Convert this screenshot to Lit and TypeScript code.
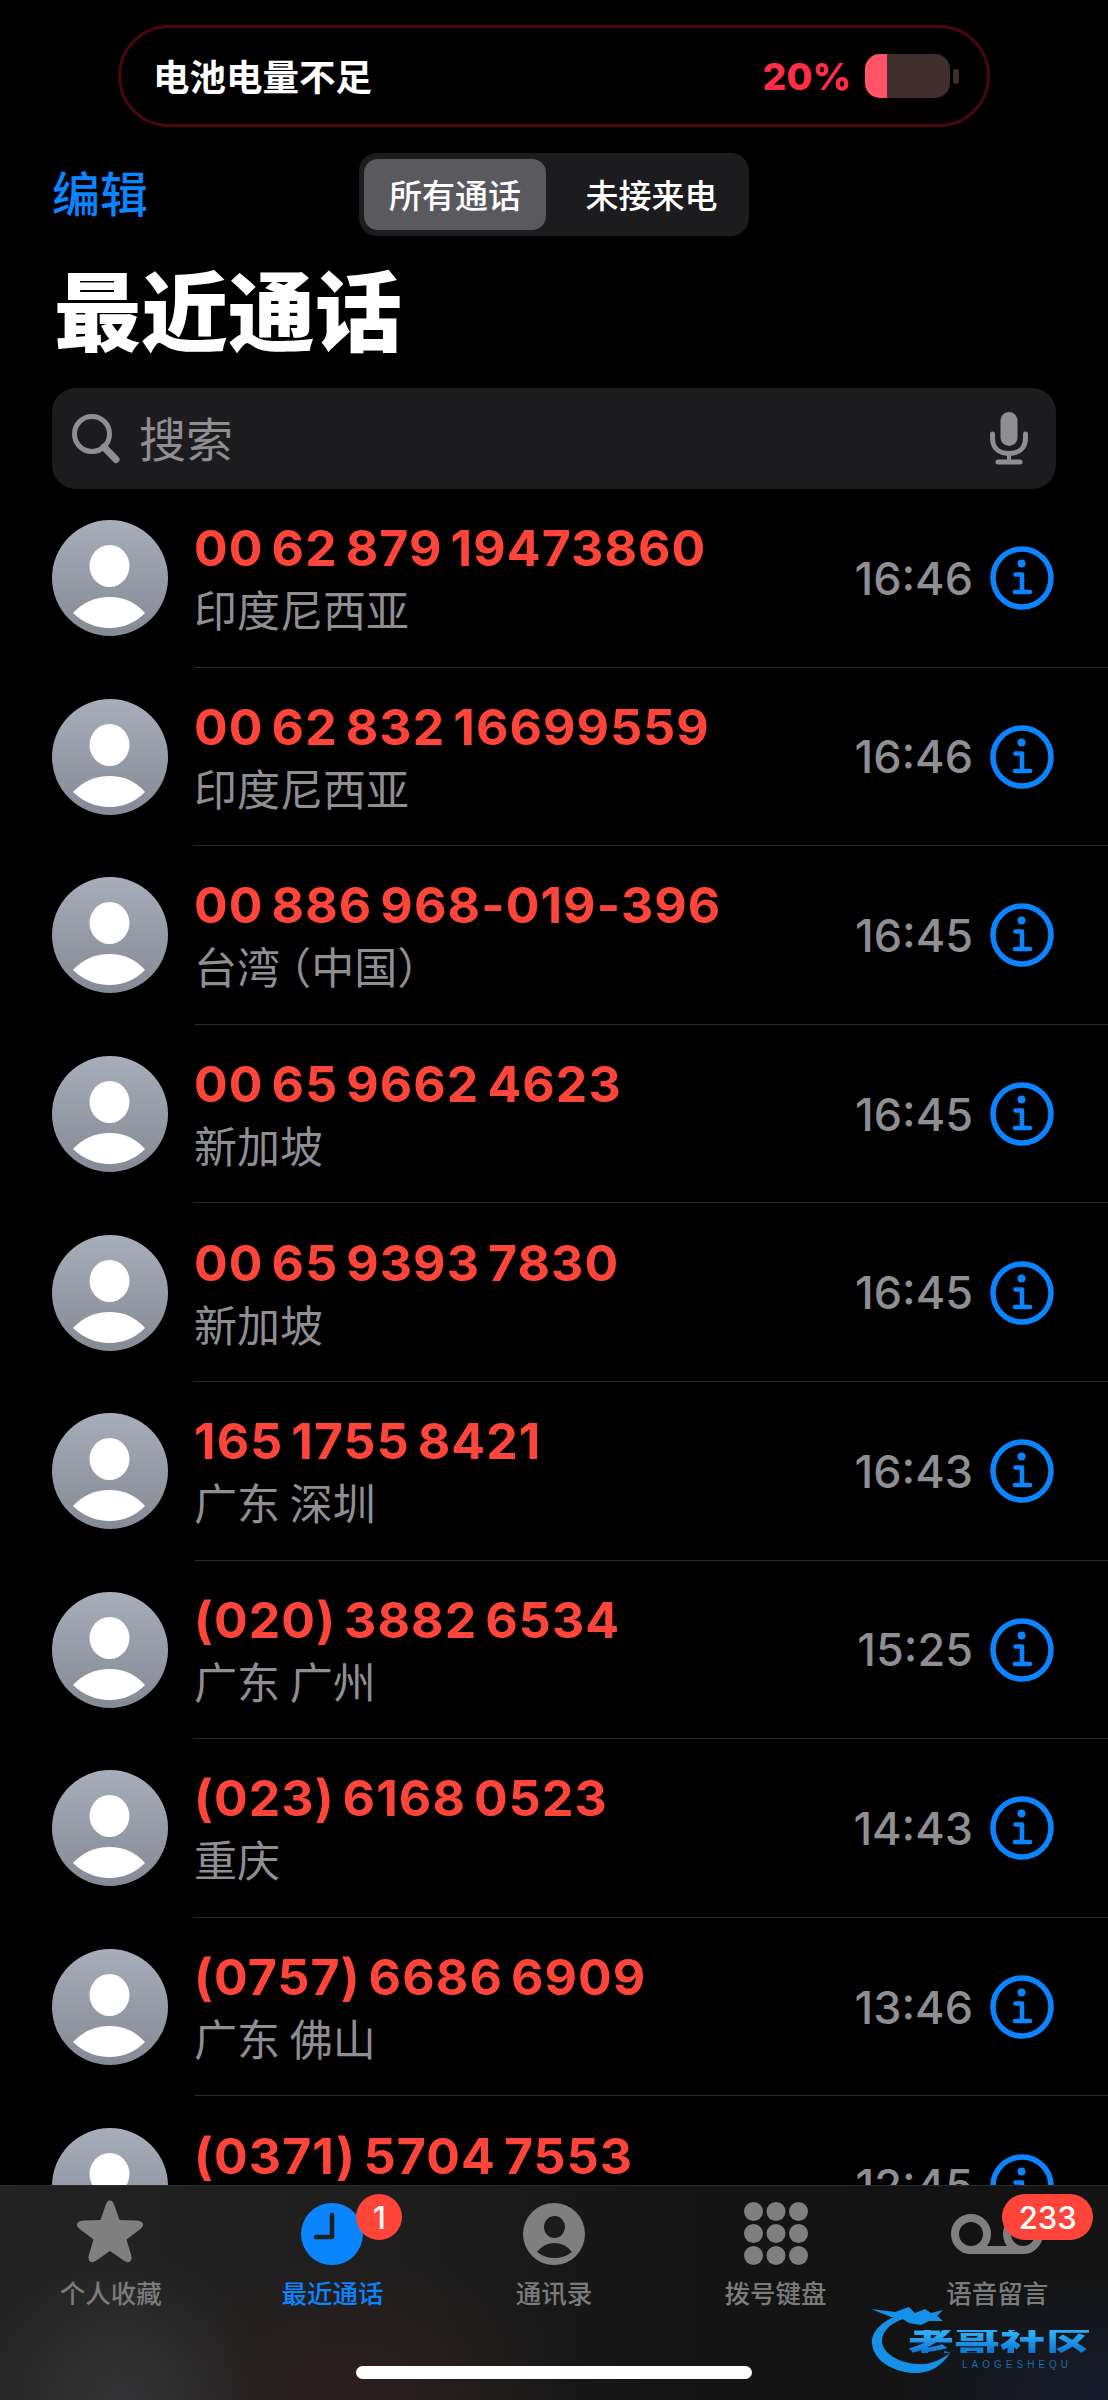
import { LitElement, html, css, svg } from "lit";
import { customElement } from "lit/decorators.js";

const rows = [
  ["00 62 879 19473860", "印度尼西亚", "16:46"],
  ["00 62 832 16699559", "印度尼西亚", "16:46"],
  ["00 886 968-019-396", "台湾 （中国）", "16:45"],
  ["00 65 9662 4623", "新加坡", "16:45"],
  ["00 65 9393 7830", "新加坡", "16:45"],
  ["165 1755 8421", "广东 深圳", "16:43"],
  ["(020) 3882 6534", "广东 广州", "15:25"],
  ["(023) 6168 0523", "重庆", "14:43"],
  ["(0757) 6686 6909", "广东 佛山", "13:46"],
  ["(0371) 5704 7553", "", "12:45"],
];

const avatar = html`<svg class="avatar" viewBox="0 0 116 116">
  <defs><linearGradient id="av" x1="0" y1="0" x2="0" y2="1"><stop offset="0" stop-color="#a7adba"/><stop offset="1" stop-color="#858a94"/></linearGradient></defs>
  <circle cx="58" cy="58" r="58" fill="url(#av)"/>
  <ellipse cx="57.5" cy="46" rx="20" ry="21" fill="#fff"/>
  <path d="M21 93Q36 77 57.5 77T93 93Q78 108 57.5 108T21 93Z" fill="#fff"/>
</svg>`;

const info = html`<svg class="info" viewBox="0 0 64 64" fill="none">
  <circle cx="32" cy="32" r="29" stroke="#0a84ff" stroke-width="5.5"/>
  <circle cx="31.5" cy="17.500" r="4" fill="#0a84ff"/>
  <path d="M25.500 28.500H32V45.500M25 46H40" stroke="#0a84ff" stroke-width="4.600" stroke-linecap="round" stroke-linejoin="round"/>
</svg>`;

const dots = [0, 1, 2].flatMap((r) => [0, 1, 2].map((c) => svg`<circle cx="${9.5 + c * 22.5}" cy="${9.5 + r * 22}" r="9.5" fill="#7f7f7f"/>`));

const tabs = [
  { label: "个人收藏", icon: html`<svg class="ico" viewBox="1 2.500 68 66"><path d="M34 3C36.500 3 37.500 5 38.500 8L43.500 22.500 59.500 23C64 23 66.500 24.500 67 26.500 67.500 28.500 66 30.500 63 32.500L50.500 42 55 57C56 60.500 55.500 63 54 64 52 65.500 50 64.500 47 62.500L34 53.500 21 62.500C18 64.500 16 65.500 14 64 12.500 63 12 60.500 13 57L17.500 42 5 32.500C2 30.500 .5 28.500 1 26.500 1.500 24.500 4 23 8.500 23L24.500 22.500 29.500 8C30.500 5 31.500 3 34 3Z" fill="#7f7f7f"/></svg>` },
  { label: "最近通话", active: true, badge: "1", icon: html`<svg class="ico" viewBox="0 0 68 66"><circle cx="34" cy="34" r="31" fill="#0a84ff"/><path d="M34 15V37H18" fill="none" stroke="#1f2024" stroke-width="4.600" stroke-linecap="round" stroke-linejoin="round"/></svg>` },
  { label: "通讯录", icon: html`<svg class="ico" viewBox="0 0 68 66"><circle cx="34" cy="34" r="31" fill="#7f7f7f"/><ellipse cx="34.500" cy="27" rx="10.500" ry="11" fill="#1c1a1a"/><path d="M17 52Q24 43 34.500 43T52 52Q44 58 34.500 58T17 52Z" fill="#1c1a1a"/></svg>` },
  { label: "拨号键盘", icon: html`<svg class="ico keypad" viewBox="0 0 64 63">${dots}</svg>` },
  { label: "语音留言", badge: "233", wide: true, icon: html`<svg class="ico vm" viewBox="0 0 92 40"><path d="M20 36H72" stroke="#7f7f7f" stroke-width="8" stroke-linecap="round"/><circle cx="20" cy="20" r="16" fill="none" stroke="#7f7f7f" stroke-width="8"/><circle cx="72" cy="20" r="16" fill="none" stroke="#7f7f7f" stroke-width="8"/></svg>` },
];

@customElement("app-root")
export class AppRoot extends LitElement {
  static styles = css`
    :host {
      display: flex;
      flex-direction: column;
      position: relative;
      width: 1108px;
      height: 2400px;
      overflow: hidden;
      background: #000;
      color: #fff;
      font-family: Inter, "Noto Sans CJK SC", sans-serif;
    }
    .top { flex: none; height: 489px; padding: 25px 52px 0; box-sizing: border-box; display: flex; flex-direction: column; }
    .top > * { flex: none; }
    .island {
      margin: 0 66px;
      height: 102px;
      box-sizing: border-box;
      border: 3px solid #4c0513;
      border-radius: 51px;
      display: flex;
      align-items: center;
      padding: 0 28px 0 32px;
    }
    .island .msg { font-size: 36.500px; font-weight: 700; flex: 1; font-family: "Noto Sans CJK SC", sans-serif; padding-bottom: 2px; }
    .island .pct { font-size: 37.500px; font-weight: 800; color: #ff2d46; margin-right: 14px; }
    .batt { width: 85px; height: 44px; border-radius: 15px; overflow: hidden; background: #3f2f2f; display: flex; }
    .batt i { display: block; width: 22px; background: #ff5366; }
    .nub { width: 6px; height: 15px; margin-left: 3px; border-radius: 3px; background: #3f2f2f; }
    .nav { height: 83px; margin-top: 26px; display: grid; grid-template-columns: 307px auto; align-items: center; }
    .edit { font-size: 48px; line-height: 60px; padding-bottom: 8px; color: #0a84ff; font-family: "Noto Sans CJK SC", sans-serif; font-weight: 500; }
    .seg { width: 390px; height: 83px; box-sizing: border-box; background: #1c1c1e; border-radius: 18px; padding: 6px 5px; display: grid; grid-template-columns: 182px 1fr; }
    .seg div { display: flex; align-items: center; justify-content: center; font-size: 33px; font-weight: 500; border-radius: 14px; font-family: "Noto Sans CJK SC", sans-serif; padding-bottom: 2px; }
    .seg .on { background: #5a5a5e; }
    .seg .off { padding-left: 13px; }
    h1 { margin: 18px 0 0 2px; font-size: 87px; line-height: 106px; height: 106px; font-weight: 900; font-family: "Noto Sans CJK SC", sans-serif; }
    .search { margin-top: 28px; height: 101px; background: #1c1c1e; border-radius: 24px; display: flex; align-items: center; padding: 0 28px 0 20px; color: #8e8e93; }
    .search .q { width: 48px; height: 50px; flex: none; }
    .search .t { flex: 1; font-size: 47px; line-height: 60px; margin-left: 19px; padding-bottom: 4px; font-family: "Noto Sans CJK SC", sans-serif; }
    .search .m { width: 38px; height: 53px; flex: none; }
    .list { flex: 1; min-height: 0; overflow: hidden; }
    .row { height: 178.600px; box-sizing: border-box; display: flex; align-items: center; position: relative; padding: 0 54px 0 52px; }
    .row::after { content: ""; position: absolute; left: 194px; right: 0; bottom: 0; height: 1px; background: #2a2a2c; }
    .avatar { width: 116px; height: 116px; flex: none; }
    .text { flex: 1; margin-left: 26px; display: flex; flex-direction: column; height: 116px; }
    .num { font-size: 50px; letter-spacing: 1.100px; word-spacing: -5px; line-height: 57px; height: 57px; font-weight: 700; color: #ff453a; white-space: nowrap; }
    .sub { font-size: 43px; line-height: 52px; height: 52px; margin-top: 5px; color: #8e8e93; font-family: "Noto Sans CJK SC", sans-serif; white-space: pre; font-feature-settings: "halt"; }
    .time { font-size: 45px; color: #8e8e93; font-weight: 500; margin-right: 17px; }
    .info { width: 64px; height: 64px; flex: none; }
    .tabbar {
      flex: none;
      height: 215px;
      box-sizing: border-box;
      border-top: 1px solid #2a2a2b;
      padding-top: 14px;
      display: grid;
      grid-template-columns: repeat(5, 1fr);
      align-items: start;
      position: relative;
      background:
        radial-gradient(circle 150px at 120px 215px, #353537 0%, rgba(53,53,55,0) 100%),
        radial-gradient(ellipse 220px 140px at 350px 200px, #2b1f1e 0%, rgba(43,31,30,0) 100%),
        radial-gradient(ellipse 200px 130px at 1090px 210px, #171c2b 0%, rgba(23,28,43,0) 100%),
        linear-gradient(90deg, #232323 0%, #1e1e1e 35%, #141414 60%, #131313 100%);
    }
    .tab { display: flex; flex-direction: column; align-items: center; position: relative; color: #7b7b7b; }
    .tab.active { color: #0a84ff; }
    .iconbox { height: 66px; display: flex; align-items: center; justify-content: center; position: relative; width: 100px; }
    .ico { width: 68px; height: 66px; }
    .ico.keypad { width: 64px; height: 63px; }
    .ico.vm { width: 92px; height: 40px; margin-top: 2px; }
    .lab { font-size: 25.500px; line-height: 30px; margin-top: 11px; font-weight: 500; font-family: "Noto Sans CJK SC", sans-serif; }
    .badge { position: absolute; top: -6px; left: 74px; height: 46px; min-width: 46px; box-sizing: border-box; border-radius: 23px; background: #ff453a; color: #fff; font-size: 31px; font-weight: 500; display: flex; align-items: center; justify-content: center; }
    .badge.wide { left: 55px; width: 91px; }
    .home { position: absolute; left: 356px; top: 180px; width: 396px; height: 13px; border-radius: 7px; background: #fff; }
    .wm { position: absolute; left: 869px; top: 115px; width: 226px; height: 76px; }
    .wm .logo { position: absolute; inset: 0; width: 226px; height: 76px; filter: blur(0.600px); }
    .wm .big {
      position: absolute; left: 39px; top: 25px; width: 186px; height: 31px;
      font-size: 46px; line-height: 31px; font-weight: 900; white-space: nowrap;
      transform: scaleY(0.74);
      background: linear-gradient(180deg, #30aef7 10%, #0f7bd6 90%);
      -webkit-background-clip: text; background-clip: text; color: transparent;
      font-family: "Noto Sans CJK SC", sans-serif;
    }
    .wm .small { position: absolute; left: 93px; top: 59px; font-size: 10px; letter-spacing: 4px; line-height: 10px; color: #176bab; font-family: "Liberation Sans", sans-serif; white-space: nowrap; }
  `;

  render() {
    return html`
      <div class="top">
        <div class="island">
          <div class="msg">电池电量不足</div>
          <div class="pct">20%</div>
          <div class="batt"><i></i></div>
          <div class="nub"></div>
        </div>
        <div class="nav">
          <div class="edit">编辑</div>
          <div class="seg"><div class="on">所有通话</div><div class="off">未接来电</div></div>
        </div>
        <h1>最近通话</h1>
        <div class="search">
          <svg class="q" viewBox="0 0 48 50" fill="none" stroke="#8e8e93"><circle cx="20" cy="20" r="17.500" stroke-width="5"/><path d="M32 33L44 45.500" stroke-width="7" stroke-linecap="round"/></svg>
          <div class="t">搜索</div>
          <svg class="m" viewBox="0 0 38 53" fill="#8e8e93"><rect x="10.500" y="0" width="17" height="34" rx="8.500"/><path d="M2.500 22V26C2.500 36 9 41.500 19 41.500S35.500 36 35.500 26V22" fill="none" stroke="#8e8e93" stroke-width="5" stroke-linecap="round"/><rect x="17" y="41" width="4" height="9"/><rect x="5.500" y="47.500" width="27" height="5" rx="2.500"/></svg>
        </div>
      </div>
      <div class="list">
        ${rows.map(
          ([n, s, t]) => html`<div class="row">
            ${avatar}
            <div class="text"><div class="num">${n}</div><div class="sub">${s}</div></div>
            <div class="time">${t}</div>
            ${info}
          </div>`
        )}
      </div>
      <div class="tabbar">
        ${tabs.map(
          (t) => html`<div class="tab ${t.active ? "active" : ""}">
            <div class="iconbox">${t.icon}${t.badge ? html`<div class="badge ${t.wide ? "wide" : ""}">${t.badge}</div>` : ""}</div>
            <div class="lab">${t.label}</div>
          </div>`
        )}
        <div class="home"></div>
        <div class="wm">
          <svg class="logo" viewBox="0 0 226 76" fill="#1592e8">
            <path d="M30 14C12 20 2 32 3 42C4 60 26 73 50 72C62 71 74 64 81 52C70 60 60 64 48 63C30 62 13 52 13 40C13 30 22 22 34 18Z"/>
            <path d="M2 8L26 11L40 6L46 12L56 8L62 12L74 9L68 15L74 20L60 20L52 24L40 22L30 16L22 16Z"/>
          </svg>
          <div class="big">老哥社区</div>
          <div class="small">LAOGESHEQU</div>
        </div>
      </div>
    `;
  }
}
